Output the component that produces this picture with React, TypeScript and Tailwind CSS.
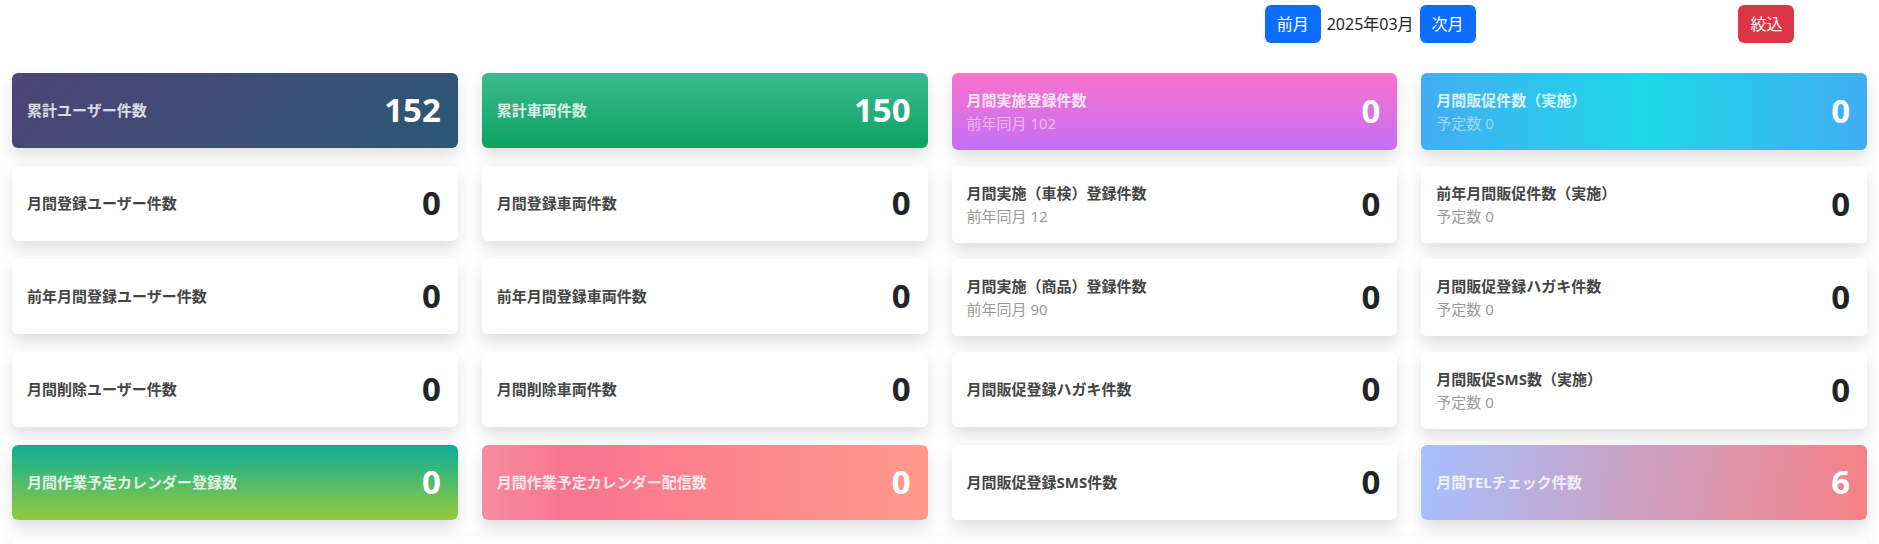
import React from "react";

type Card = {
  label: string;
  sub?: string;
  value: string;
  bg?: string;
};

const cards: Card[] = [
  { label: "累計ユーザー件数", value: "152", bg: "bg-[linear-gradient(135deg,#4e4376_0%,#2b5876_100%)]" },
  { label: "累計車両件数", value: "150", bg: "bg-[linear-gradient(to_top,#0ba360_0%,#3cba92_100%)]" },
  { label: "月間実施登録件数", sub: "前年同月 102", value: "0", bg: "bg-[linear-gradient(to_top,#c471f5_0%,#fa71cd_100%)]" },
  { label: "月間販促件数（実施）", sub: "予定数 0", value: "0", bg: "bg-[linear-gradient(90deg,#43adf3_0%,#1ed8e7_50%,#41adf3_100%)]" },

  { label: "月間登録ユーザー件数", value: "0" },
  { label: "月間登録車両件数", value: "0" },
  { label: "月間実施（車検）登録件数", sub: "前年同月 12", value: "0" },
  { label: "前年月間販促件数（実施）", sub: "予定数 0", value: "0" },

  { label: "前年月間登録ユーザー件数", value: "0" },
  { label: "前年月間登録車両件数", value: "0" },
  { label: "月間実施（商品）登録件数", sub: "前年同月 90", value: "0" },
  { label: "月間販促登録ハガキ件数", sub: "予定数 0", value: "0" },

  { label: "月間削除ユーザー件数", value: "0" },
  { label: "月間削除車両件数", value: "0" },
  { label: "月間販促登録ハガキ件数", value: "0" },
  { label: "月間販促SMS数（実施）", sub: "予定数 0", value: "0" },

  { label: "月間作業予定カレンダー登録数", value: "0", bg: "bg-[linear-gradient(to_bottom,#0caf98_0%,#96c93d_100%)]" },
  { label: "月間作業予定カレンダー配信数", value: "0", bg: "bg-[linear-gradient(to_right,#f78ca0_0%,#f9748f_19%,#fd868c_60%,#fe9a8b_100%)]" },
  { label: "月間販促登録SMS件数", value: "0" },
  { label: "月間TELチェック件数", value: "6", bg: "bg-[linear-gradient(100deg,#a6c0fe_0%,#f68084_100%)]" },
];

function StatCard({ c }: { c: Card }) {
  const colored = !!c.bg;
  return (
    <div
      className={`flex items-center justify-between rounded-[6px] py-4 pl-[15px] pr-[17px] shadow-[0_8px_16px_rgba(0,0,0,0.13)] ${
        colored ? c.bg : "bg-white"
      }`}
    >
      <div className="flex flex-col">
        <div
          className={`text-[15px] leading-[22.5px] font-bold ${
            colored ? "text-white/80" : "text-[#454545]"
          }`}
        >
          {c.label}
        </div>
        {c.sub && (
          <div
            className={`text-[15px] leading-[22.5px] font-normal ${
              colored ? "text-white/50" : "text-[#9a9a9a]"
            }`}
          >
            {c.sub}
          </div>
        )}
      </div>
      <div
        className={`font-['Open_Sans','Noto_Sans',sans-serif] text-[33px] leading-[42.5px] font-bold ${
          colored ? "text-white" : "text-[#212529]"
        }`}
      >
        {c.value}
      </div>
    </div>
  );
}

export default function App() {
  return (
    <div className="min-h-[544px] bg-white font-['Noto_Sans','Noto_Sans_CJK_JP',sans-serif] text-[#212529]">
      <div className="grid grid-cols-12 pt-[5px]">
        <div className="col-span-8" />
        <div className="col-span-3 flex items-center gap-[6px] pl-3">
          <button className="h-[38px] rounded-[6px] bg-[#0d6efd] px-3 text-[16px] text-white">
            前月
          </button>
          <span className="text-[16px]">2025年03月</span>
          <button className="h-[38px] rounded-[6px] bg-[#0d6efd] px-3 text-[16px] text-white">
            次月
          </button>
        </div>
        <div className="col-span-1 flex items-center pl-4">
          <button className="h-[38px] rounded-[6px] bg-[#dc3545] px-3 text-[16px] text-white">
            絞込
          </button>
        </div>
      </div>

      <div className="mt-[30px] grid grid-cols-4 items-start gap-x-6 gap-y-4 px-3">
        {cards.map((c, i) => (
          <StatCard key={i} c={c} />
        ))}
      </div>

      <div className="mx-3 mt-4 h-[200px] rounded-[6px] bg-white shadow-[0_8px_16px_rgba(0,0,0,0.13)]" />
    </div>
  );
}
